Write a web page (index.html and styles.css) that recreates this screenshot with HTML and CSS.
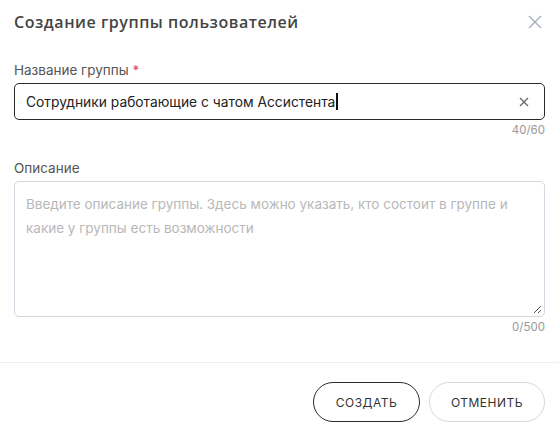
FILE: index.html
```html
<!DOCTYPE html>
<html lang="ru">
<head>
<meta charset="utf-8">
<link rel="stylesheet" href="styles.css">
</head>
<body>
<div class="dialog">
  <div class="header">
    <h1 class="title">Создание группы пользователей</h1>
    <button class="close" aria-label="close">
      <svg width="14" height="14" viewBox="0 0 14 14"><path d="M1 1L13 13M13 1L1 13" stroke="#a7aebb" stroke-width="1.4" fill="none"/></svg>
    </button>
  </div>
  <div class="body">
    <div class="field">
      <label class="label">Название группы <span class="req">*</span></label>
      <div class="input">
        <span class="value">Сотрудники работающие с чатом Ассистента</span><span class="caret"></span>
        <svg class="clear" width="10" height="10" viewBox="0 0 10 10"><path d="M1 1L9 9M9 1L1 9" stroke="#6b6b6b" stroke-width="1.4" fill="none"/></svg>
      </div>
      <div class="counter">40/60</div>
    </div>
    <div class="field second">
      <label class="label">Описание</label>
      <div class="textarea">
        <div class="placeholder">Введите описание группы. Здесь можно указать, кто состоит в группе и какие у группы есть возможности</div>
        <svg class="resize" width="9" height="9" viewBox="0 0 9 9"><path d="M8 1L1 8M8 5L5 8" stroke="#555" stroke-width="1" fill="none"/></svg>
      </div>
      <div class="counter">0/500</div>
    </div>
  </div>
  <div class="footer">
    <button class="btn primary">Создать</button>
    <button class="btn secondary">Отменить</button>
  </div>
</div>
</body>
</html>
```
FILE: styles.css
```css
html, body { margin: 0; padding: 0; background: #fff; }
body { font-family: Inter, "Noto Sans", sans-serif; color: #222; width: 559px; height: 436px; overflow: hidden; }
.dialog { display: flex; flex-direction: column; }
.header { display: flex; align-items: center; justify-content: space-between; padding: 10px 17px 0 14px; height: 24px; }
.title { margin: 0; font-family: "Open Sans", Inter, sans-serif; font-size: 16px; font-weight: 600; color: #444; letter-spacing: 0.55px; }
.close { border: 0; background: none; padding: 0; width: 14px; height: 14px; display: flex; }
.body { padding: 28px 14px 0 14px; }
.field { display: flex; flex-direction: column; }
.second { margin-top: 23px; }
.label { font-size: 13.5px; color: #555; line-height: 16px; margin-bottom: 5px; }
.req { color: #e5484d; }
.input { height: 37px; box-sizing: border-box; border: 1px solid #2a2a2a; border-radius: 5px; display: flex; align-items: center; padding: 0 15px 0 11px; position: relative; }
.value { font-size: 13.8px; color: #222; }
.caret { display: inline-block; width: 2px; height: 17px; background: #111; margin-left: 1px; }
.clear { margin-left: auto; }
.counter { text-align: right; font-size: 11.5px; color: #999; line-height: 14px; margin-top: 3px; }
.textarea { height: 136px; box-sizing: border-box; border: 1px solid #d3d8e1; border-radius: 5px; padding: 10px 11px; position: relative; }
.placeholder { font-size: 13.5px; color: #b8b8b8; line-height: 24px; }
.resize { position: absolute; right: 2px; bottom: 2px; }
.footer { margin-top: 28px; border-top: 1px solid #eeeff2; display: flex; justify-content: flex-end; gap: 9px; padding: 19px 14px 0 14px; }
.btn { height: 40px; border-radius: 20px; background: #fff; font-family: Inter, sans-serif; font-size: 12px; text-transform: uppercase; letter-spacing: 0.5px; color: #333; font-weight: 400; cursor: pointer; }
.primary { width: 107px; border: 1px solid #2a2a2a; }
.secondary { width: 116px; border: 1px solid #d3d8e1; }
```
